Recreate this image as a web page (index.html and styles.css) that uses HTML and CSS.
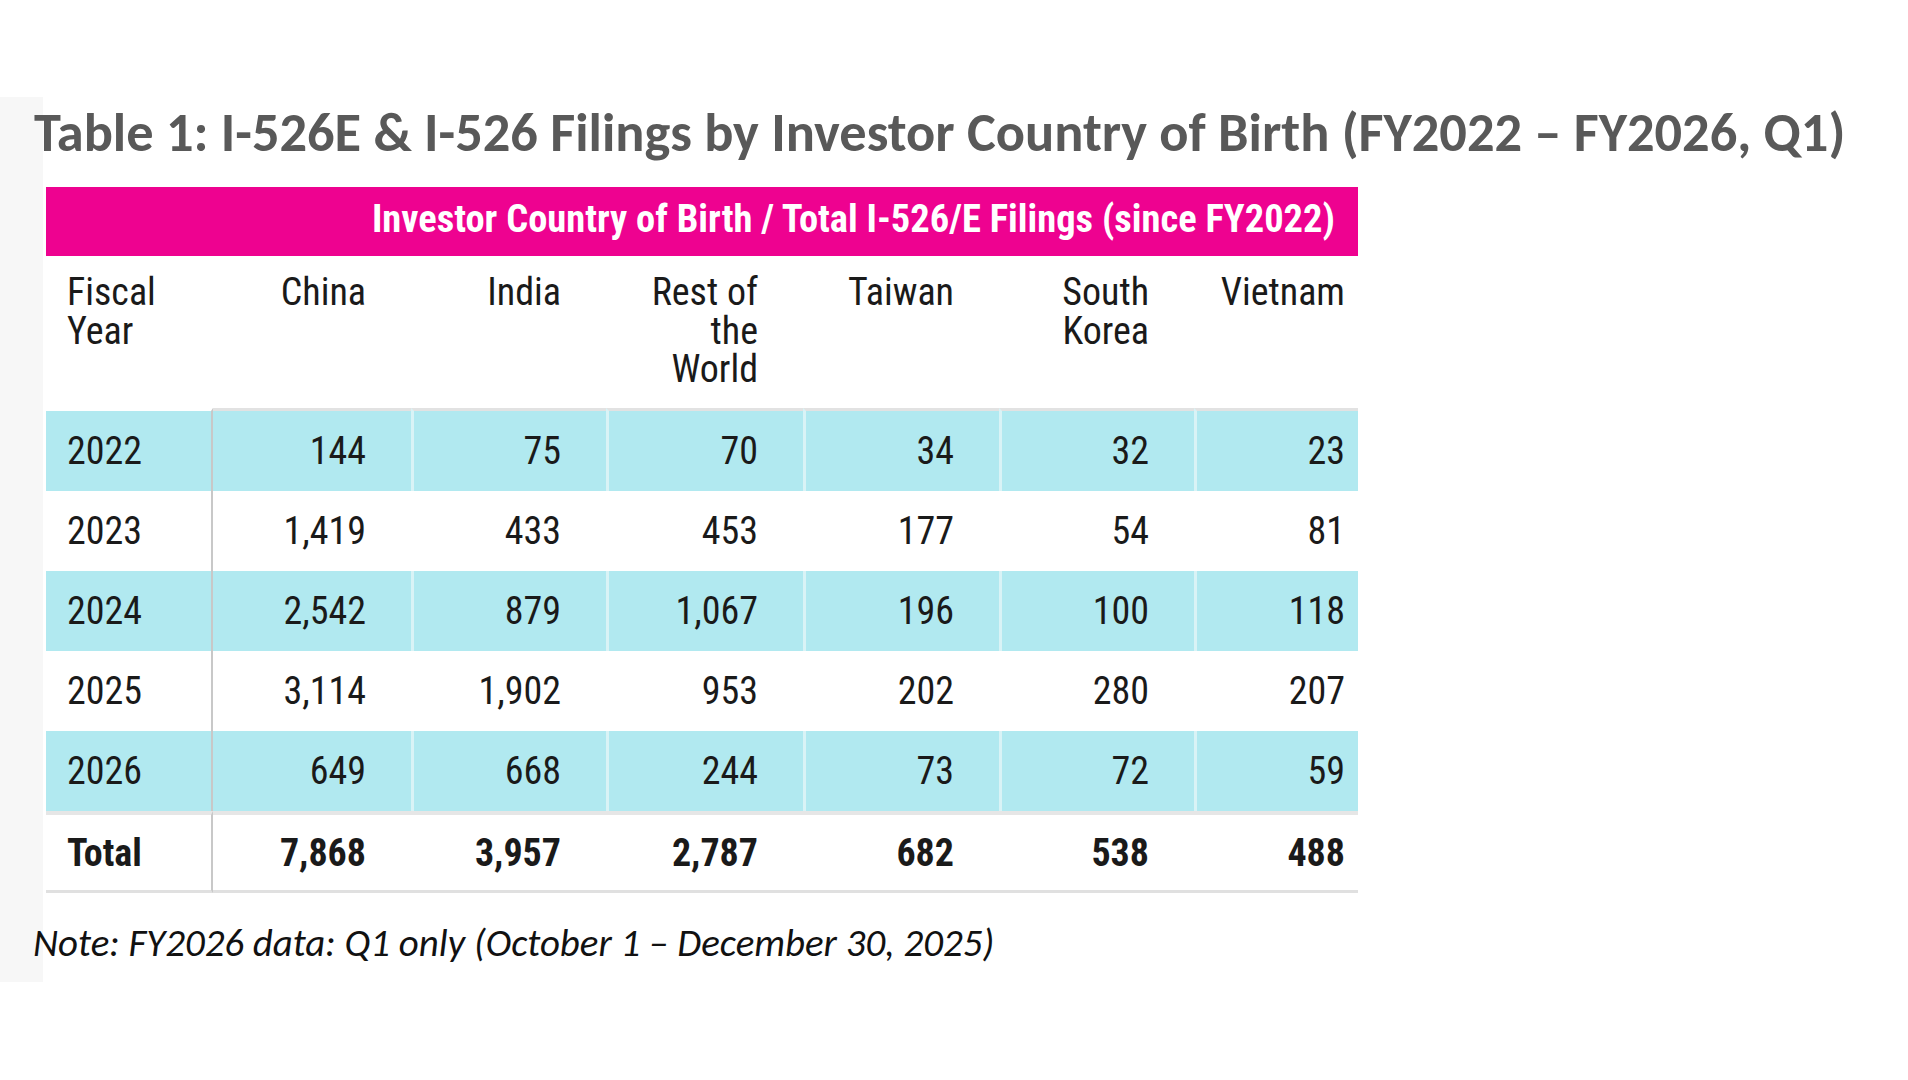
FILE: index.html
```html
<!DOCTYPE html>
<html lang="en">
<head>
<meta charset="utf-8">
<title>Table 1: I-526E &amp; I-526 Filings by Investor Country of Birth</title>
<link rel="stylesheet" href="styles.css">
</head>
<body>
<div class="sheet">
  <h1 class="title">Table 1: I-526E &amp; I-526 Filings by Investor Country of Birth (FY2022 – FY2026, Q1)</h1>
  <div class="tbl">
    <div class="caption">Investor Country of Birth / Total I-526/E Filings (since FY2022)</div>

    <div class="hd first">Fiscal<br>Year</div>
    <div class="hd">China</div>
    <div class="hd">India</div>
    <div class="hd">Rest of<br>the<br>World</div>
    <div class="hd">Taiwan</div>
    <div class="hd">South<br>Korea</div>
    <div class="hd last">Vietnam</div>

    <div class="c first cyan top">2022</div>
    <div class="c cyan top d1">144</div>
    <div class="c cyan top">75</div>
    <div class="c cyan top">70</div>
    <div class="c cyan top">34</div>
    <div class="c cyan top">32</div>
    <div class="c cyan top last">23</div>

    <div class="c first">2023</div>
    <div class="c d1">1,419</div>
    <div class="c">433</div>
    <div class="c">453</div>
    <div class="c">177</div>
    <div class="c">54</div>
    <div class="c last">81</div>

    <div class="c first cyan">2024</div>
    <div class="c cyan d1">2,542</div>
    <div class="c cyan">879</div>
    <div class="c cyan">1,067</div>
    <div class="c cyan">196</div>
    <div class="c cyan">100</div>
    <div class="c cyan last">118</div>

    <div class="c first">2025</div>
    <div class="c d1">3,114</div>
    <div class="c">1,902</div>
    <div class="c">953</div>
    <div class="c">202</div>
    <div class="c">280</div>
    <div class="c last">207</div>

    <div class="c first cyan">2026</div>
    <div class="c cyan d1">649</div>
    <div class="c cyan">668</div>
    <div class="c cyan">244</div>
    <div class="c cyan">73</div>
    <div class="c cyan">72</div>
    <div class="c cyan last">59</div>

    <div class="c first total">Total</div>
    <div class="c total d1">7,868</div>
    <div class="c total">3,957</div>
    <div class="c total">2,787</div>
    <div class="c total">682</div>
    <div class="c total">538</div>
    <div class="c total last">488</div>
  </div>
  <p class="note">Note: FY2026 data: Q1 only (October 1 – December 30, 2025)</p>
</div>
</body>
</html>
```

FILE: styles.css
```css
html, body {
  margin: 0;
  padding: 0;
  background: #ffffff;
}

body {
  width: 1908px;
  height: 1080px;
  overflow: hidden;
}

.sheet {
  margin-top: 97px;
  height: 885px;
  box-sizing: border-box;
  padding-top: 9px;
  background: linear-gradient(to right, #f7f7f7 0, #f7f7f7 43px, #ffffff 43px);
}

.title {
  margin: 0 0 27px 34px;
  font-family: "Carlito", "Lato", "Open Sans", sans-serif;
  font-weight: 700;
  font-size: 54.4px;
  line-height: 1;
  color: #595959;
  white-space: nowrap;
}

.tbl {
  margin-left: 46px;
  display: grid;
  grid-template-columns: 167px 198px 195px 197px 196px 195px 164px;
  width: 1312px;
  font-family: "Roboto Condensed", "Roboto", sans-serif;
  font-stretch: condensed;
  font-size: 38px;
  color: #1a1a1a;
}

.caption {
  grid-column: 1 / -1;
  height: 69px;
  box-sizing: border-box;
  background: #ee0290;
  color: #ffffff;
  font-weight: 700;
  font-size: 38.5px;
  text-align: right;
  padding-right: 23px;
  line-height: 64px;
}

.hd {
  height: 152px;
  box-sizing: border-box;
  padding-top: 17px;
  padding-right: 45px;
  text-align: right;
  line-height: 38.5px;
}

.hd.first {
  text-align: left;
  padding-left: 21px;
  padding-right: 0;
}

.hd.last,
.c.last {
  padding-right: 13px;
}

.c {
  height: 80px;
  box-sizing: border-box;
  display: flex;
  align-items: center;
  justify-content: flex-end;
  padding-right: 45px;
  line-height: 1;
}

.c.first {
  justify-content: flex-start;
  padding-left: 21px;
  padding-right: 0;
  border-right: 2px solid #c8c8c8;
}

.c.cyan {
  background: #b1e9f0;
  background-clip: padding-box;
}

.c.cyan:not(.first):not(.d1) {
  border-left: 3px solid #d9f3f6;
}

.c.top {
  height: 83px;
  border-top: 3px solid #e2e2e2;
}

.c.top.first {
  border-top-color: #ffffff;
}

.c.total {
  height: 82px;
  font-weight: 700;
  border-top: 4px solid #e6e6e6;
  border-bottom: 3px solid #e0e0e0;
}

.note {
  margin: 31px 0 0 33px;
  font-family: "Carlito", "Lato", "Open Sans", sans-serif;
  font-style: italic;
  font-size: 38.9px;
  line-height: 1;
  color: #111111;
  white-space: nowrap;
}
```
